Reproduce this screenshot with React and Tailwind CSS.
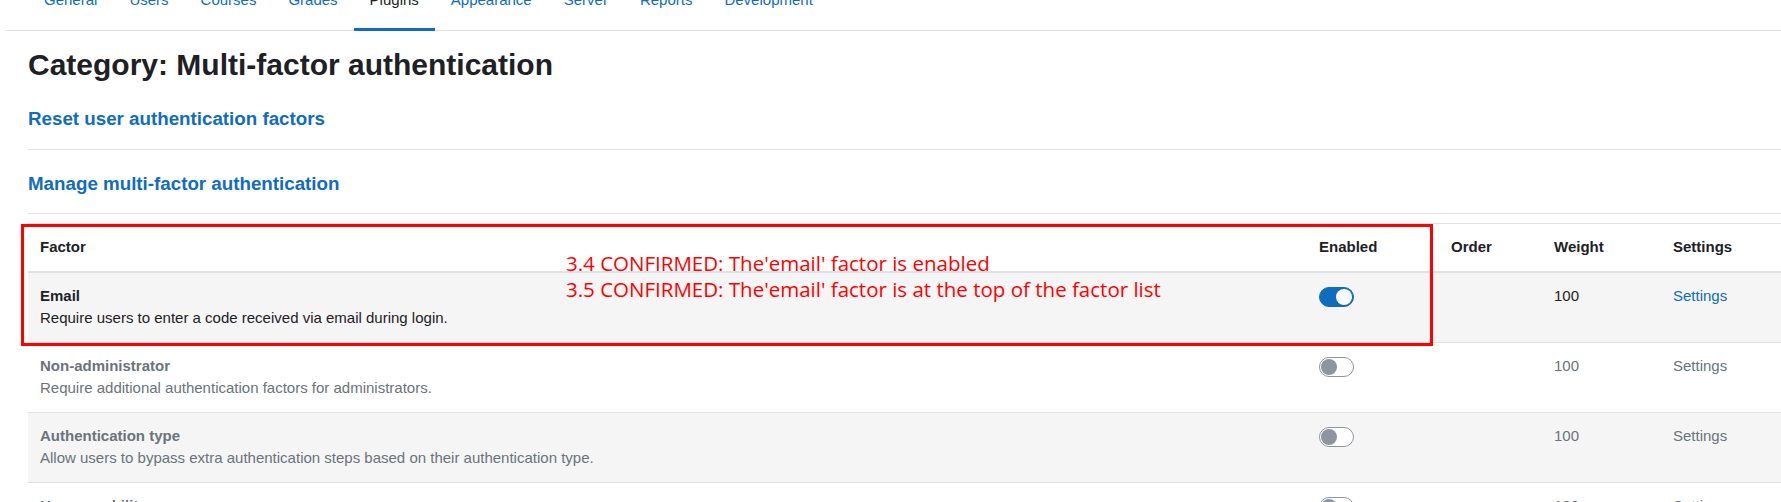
import { useState } from "react";

const tabs = ["General", "Users", "Courses", "Grades", "Plugins", "Appearance", "Server", "Reports", "Development"];

const factors = [
  { id: "email", name: "Email", desc: "Require users to enter a code received via email during login.", enabled: true, weight: 100 },
  { id: "nosetup", name: "Non-administrator", desc: "Require additional authentication factors for administrators.", enabled: false, weight: 100 },
  { id: "auth", name: "Authentication type", desc: "Allow users to bypass extra authentication steps based on their authentication type.", enabled: false, weight: 100 },
  { id: "capability", name: "User capability", desc: "Users with this capability can log in without additional authentication.", enabled: false, weight: 100 },
];

function Toggle({ on, onClick }) {
  return (
    <button
      onClick={onClick}
      className={
        on
          ? "mt-[2px] flex h-[20px] w-[35px] items-center justify-end rounded-full border border-[#0f6cbf] bg-[#0f6cbf] px-[1px]"
          : "mt-[2px] flex h-[20px] w-[35px] items-center justify-start rounded-full border border-[#8f959e] bg-white px-[1px]"
      }
    >
      <span className={on ? "h-[16px] w-[16px] rounded-full bg-white" : "h-[16px] w-[16px] rounded-full bg-[#8f959e]"} />
    </button>
  );
}

export default function App() {
  const [rows, setRows] = useState(factors);

  function toggle(id) {
    setRows(rows.map((r) => (r.id === id ? { ...r, enabled: !r.enabled } : r)));
  }

  return (
    <div className="relative h-[502px] overflow-hidden bg-white font-['Liberation_Sans',Arial,sans-serif] text-[15px] leading-[22.5px] text-[#1d2125]">
      <nav className="ml-[6px] flex h-[31px] items-end border-b border-[#dee2e6] pl-[22px]">
        {tabs.map((t) => (
          <a
            key={t}
            href="#"
            className={
              t === "Plugins"
                ? "-mb-px border-b-[3px] border-[#0f6cbf] px-4 pb-[17px] text-[#1d2125]"
                : "-mb-px border-b-[3px] border-transparent px-4 pb-[17px] text-[#0f6cbf]"
            }
          >
            {t}
          </a>
        ))}
      </nav>

      <main className="pl-[28px]">
        <h2 className="mt-[16px] text-[30px] font-bold leading-[36px]">Category: Multi-factor authentication</h2>
        <h5 className="mt-[25px] border-b border-[#dee2e6] pb-[18px] text-[18.75px] font-bold leading-[22.5px]">
          <a href="#" className="text-[#0f6cbf]">Reset user authentication factors</a>
        </h5>
        <h5 className="mt-[23px] border-b border-[#dee2e6] pb-[18px] text-[18.75px] font-bold leading-[22.5px]">
          <a href="#" className="text-[#0f6cbf]">Manage multi-factor authentication</a>
        </h5>

        <table className="mt-[9px] w-full table-fixed border-collapse">
          <colgroup>
            <col />
            <col className="w-[132px]" />
            <col className="w-[103px]" />
            <col className="w-[119px]" />
            <col className="w-[120px]" />
          </colgroup>
          <thead>
            <tr className="border-t border-b-2 border-[#dee2e6]">
              <th className="p-3 text-left font-bold">Factor</th>
              <th className="p-3 text-left font-bold">Enabled</th>
              <th className="p-3 text-left font-bold">Order</th>
              <th className="p-3 text-left font-bold">Weight</th>
              <th className="p-3 text-left font-bold">Settings</th>
            </tr>
          </thead>
          <tbody>
            {rows.map((r, i) => {
              const dim = r.id !== "email";
              return (
                <tr key={r.id} className={i % 2 === 0 ? "border-b border-[#dee2e6] bg-[#f5f5f5]" : "border-b border-[#dee2e6] bg-white"}>
                  <td className={dim ? "p-3 align-top text-[#6a737b]" : "p-3 align-top"}>
                    <div className="font-bold">{r.name}</div>
                    <div>{r.desc}</div>
                  </td>
                  <td className="p-3 align-top">
                    <Toggle on={r.enabled} onClick={() => toggle(r.id)} />
                  </td>
                  <td className="p-3 align-top"></td>
                  <td className={dim ? "p-3 align-top text-[#6a737b]" : "p-3 align-top"}>{r.weight}</td>
                  <td className="p-3 align-top">
                    <a href="#" className={dim ? "text-[#6a737b]" : "text-[#0f6cbf]"}>Settings</a>
                  </td>
                </tr>
              );
            })}
          </tbody>
        </table>
      </main>

      {/* annotation overlay */}
      <div className="pointer-events-none absolute left-[21px] top-[224px] h-[122px] w-[1412px] border-[3px] border-[#ff0000]" />
      <div className="pointer-events-none absolute left-[566px] top-[250px] font-['Open_Sans',sans-serif] text-[20.5px] leading-[26px] text-[#ff0000]">
        <div>3.4 CONFIRMED: The'email' factor is enabled</div>
        <div>3.5 CONFIRMED: The'email' factor is at the top of the factor list</div>
      </div>
    </div>
  );
}
